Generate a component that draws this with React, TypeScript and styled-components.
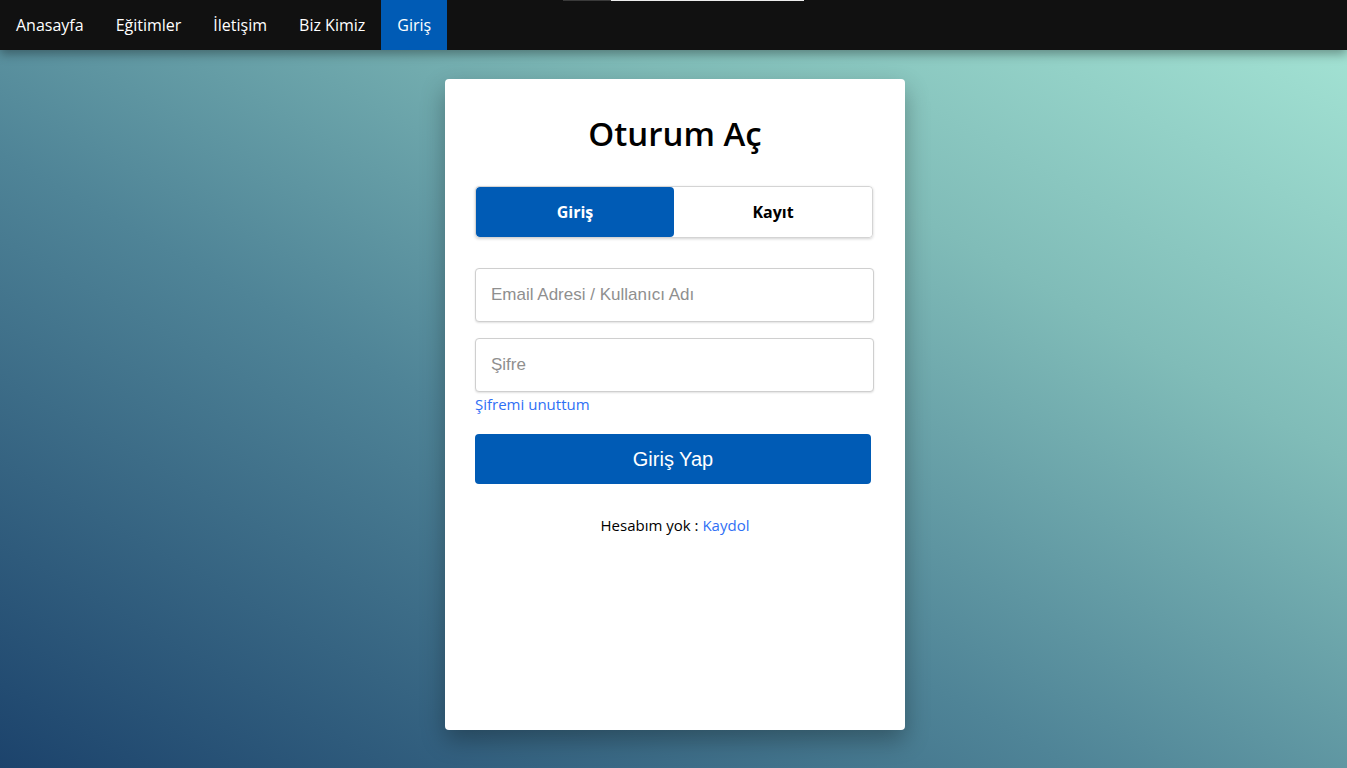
import React, { useState } from "react";
import styled, { createGlobalStyle } from "styled-components";

const GlobalStyle = createGlobalStyle`
  html, body {
    margin: 0;
    padding: 0;
    height: 100%;
  }
  body {
    font-family: "Open Sans", "Noto Sans", "DejaVu Sans", sans-serif;
    overflow: hidden;
  }
  * {
    box-sizing: border-box;
  }
`;

const Page = styled.div`
  width: 100vw;
  height: 100vh;
  display: flex;
  flex-direction: column;
  background: linear-gradient(to right top, #1c436c 0%, #4f8497 40%, #80bcb8 70%, #a6e6d6 100%);
`;

const NavBar = styled.nav`
  position: relative;
  height: 50px;
  display: flex;
  align-items: stretch;
  background-color: #111111;
  box-shadow: 0 4px 10px rgba(0, 0, 0, 0.35);
  z-index: 2;
`;

const NavItem = styled.a<{ $active?: boolean }>`
  display: flex;
  align-items: center;
  padding: 0 16px;
  color: #ffffff;
  font-size: 16px;
  text-decoration: none;
  background-color: ${(p) => (p.$active ? "#005bb5" : "transparent")};
  cursor: pointer;
`;

const LoadBar = styled.div`
  position: absolute;
  top: 0;
  left: 563px;
  width: 241px;
  height: 1px;
  display: flex;
`;

const LoadPart = styled.span<{ $w: number; $c: string }>`
  width: ${(p) => p.$w}px;
  background-color: ${(p) => p.$c};
`;

const Main = styled.main`
  flex: 1;
  display: flex;
  justify-content: center;
  padding-top: 29px;
  padding-left: 3px;
`;

const Card = styled.div`
  width: 460px;
  height: 651px;
  background-color: #ffffff;
  border-radius: 4px;
  box-shadow: 0 10px 25px rgba(0, 0, 0, 0.3);
  padding: 30px 30px;
  display: flex;
  flex-direction: column;
`;

const Title = styled.h1`
  margin: 0 0 27px;
  text-align: center;
  font-size: 33px;
  font-weight: 600;
  color: #000000;
  line-height: 50px;
`;

const Toggle = styled.div`
  display: flex;
  height: 52px;
  margin-right: 2px;
  border: 1px solid #d4d4d4;
  border-radius: 4px;
  box-shadow: 0 1px 3px rgba(0, 0, 0, 0.18);
  overflow: hidden;
  margin-bottom: 30px;
`;

const ToggleButton = styled.button<{ $active?: boolean }>`
  flex: 1;
  border: none;
  border-radius: 4px;
  font-family: "Open Sans", "Noto Sans", sans-serif;
  font-size: 16px;
  font-weight: 700;
  color: ${(p) => (p.$active ? "#ffffff" : "#000000")};
  background-color: ${(p) => (p.$active ? "#005bb5" : "#ffffff")};
  cursor: pointer;
`;

const Input = styled.input`
  width: 399px;
  height: 54px;
  padding: 0 15px;
  border: 1px solid #cfcfcf;
  border-radius: 4px;
  box-shadow: 0 1px 2px rgba(0, 0, 0, 0.12);
  font-family: "Liberation Sans", Arial, sans-serif;
  font-size: 17px;
  color: #333;
  outline: none;

  &::placeholder {
    color: #8f8f8f;
  }
`;

const Field = styled.div<{ $gap: number }>`
  display: flex;
  margin-bottom: ${(p) => p.$gap}px;
`;

const SmallLink = styled.a`
  font-size: 15px;
  color: #2f6ff5;
  text-decoration: none;
  cursor: pointer;
`;

const ForgotRow = styled.div`
  line-height: 24px;
  margin-bottom: 18px;
`;

const SubmitButton = styled.button`
  width: 396px;
  height: 50px;
  border: none;
  border-radius: 4px;
  background-color: #005bb5;
  color: #ffffff;
  font-family: "Liberation Sans", Arial, sans-serif;
  font-size: 20px;
  cursor: pointer;
`;

const Footer = styled.p`
  margin: 31px 0 0;
  text-align: center;
  font-size: 15px;
  color: #000000;
`;

function App() {
  const [tab, setTab] = useState("giris");

  return (
    <>
      <GlobalStyle />
      <Page>
        <NavBar>
          <NavItem>Anasayfa</NavItem>
          <NavItem>Eğitimler</NavItem>
          <NavItem>İletişim</NavItem>
          <NavItem>Biz Kimiz</NavItem>
          <NavItem $active>Giriş</NavItem>
          <LoadBar>
            <LoadPart $w={48} $c="#3a3a3a" />
            <LoadPart $w={193} $c="#ececec" />
          </LoadBar>
        </NavBar>
        <Main>
          <Card>
            <Title>Oturum Aç</Title>
            <Toggle>
              <ToggleButton $active={tab === "giris"} onClick={() => setTab("giris")}>
                Giriş
              </ToggleButton>
              <ToggleButton $active={tab === "kayit"} onClick={() => setTab("kayit")}>
                Kayıt
              </ToggleButton>
            </Toggle>
            <Field $gap={16}>
              <Input placeholder="Email Adresi / Kullanıcı Adı" />
            </Field>
            <Field $gap={0}>
              <Input type="password" placeholder="Şifre" />
            </Field>
            <ForgotRow>
              <SmallLink>Şifremi unuttum</SmallLink>
            </ForgotRow>
            <SubmitButton>Giriş Yap</SubmitButton>
            <Footer>
              Hesabım yok : <SmallLink>Kaydol</SmallLink>
            </Footer>
          </Card>
        </Main>
      </Page>
    </>
  );
}

export default App;
